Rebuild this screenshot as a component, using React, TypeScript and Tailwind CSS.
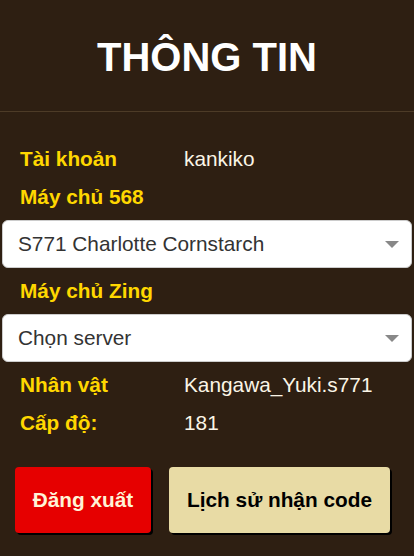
import React from "react";

function Row({ label, value }: { label: string; value?: string }) {
  return (
    <div className="flex h-[38px] items-center px-[20px]">
      <div className="w-[164px] font-bold text-[#ffd700]">{label}</div>
      {value && <div className="text-[#fbf5e6]">{value}</div>}
    </div>
  );
}

function Select({ text }: { text: string }) {
  return (
    <div className="mx-[2px] my-[4px] flex h-[48px] items-center justify-between rounded-[6px] border border-[#cccccc] bg-white pl-[15px] pr-[12px] text-[#333333]">
      <span>{text}</span>
      <svg width="14" height="7" viewBox="0 0 14 7">
        <polygon points="0,0 14,0 7,7" fill="#888888" />
      </svg>
    </div>
  );
}

export default function App() {
  return (
    <div
      className="min-h-[556px] w-full bg-[#2e1f12] text-[20.8px] leading-tight"
      style={{ fontFamily: '"Liberation Sans", Arial, sans-serif' }}
    >
      <div className="flex h-[112px] items-center justify-center border-b border-[#4d3b27] pt-[2px]">
        <h1 className="text-[40px] font-bold text-white">THÔNG TIN</h1>
      </div>
      <div className="pt-[28px]">
        <Row label="Tài khoản" value="kankiko" />
        <Row label="Máy chủ 568" />
        <Select text="S771 Charlotte Cornstarch" />
        <Row label="Máy chủ Zing" />
        <Select text="Chọn server" />
        <Row label="Nhân vật" value="Kangawa_Yuki.s771" />
        <Row label="Cấp độ:" value="181" />
      </div>
      <div className="mt-[25px] flex gap-[18px] px-[15px]">
        <button className="h-[66px] w-[136px] rounded-[4px] bg-[#e60000] font-bold text-[#fff3d6] shadow-[2px_2px_0_#000000]">
          Đăng xuất
        </button>
        <button className="h-[66px] w-[221px] rounded-[4px] bg-[#e8dba5] font-bold text-black shadow-[2px_2px_0_#000000]">
          Lịch sử nhận code
        </button>
      </div>
    </div>
  );
}
